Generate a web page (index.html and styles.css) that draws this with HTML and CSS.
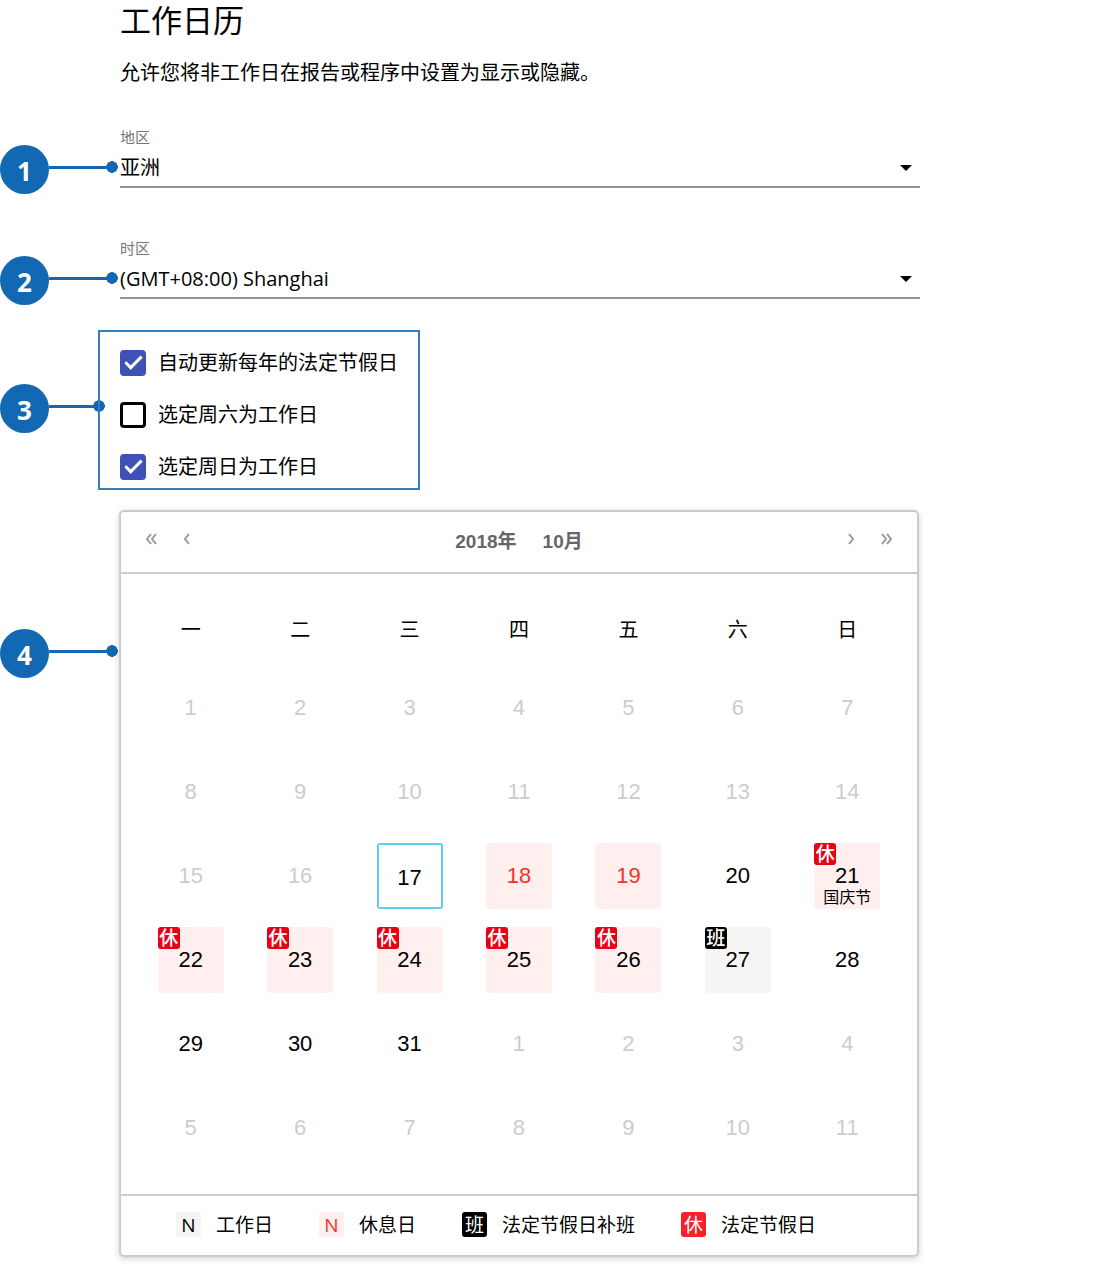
FILE: index.html
```html
<!DOCTYPE html>
<html lang="zh-CN">
<head>
<meta charset="utf-8">
<meta name="viewport" content="width=device-width, initial-scale=1">
<title>工作日历</title>
<link rel="stylesheet" href="styles.css">
</head>
<body>
<main class="page">
  <h1 class="title">工作日历</h1>
  <p class="intro">允许您将非工作日在报告或程序中设置为显示或隐藏。</p>

  <div class="field">
    <span class="callout"><b class="callout-number">1</b><i class="leader"></i></span>
    <label class="field-label" for="region">地区</label>
    <select class="field-select" id="region"><option>亚洲</option></select>
    <svg class="field-arrow" viewBox="0 0 12 6" aria-hidden="true"><path d="M0 0h12L6 6z"/></svg>
  </div>

  <div class="field">
    <span class="callout"><b class="callout-number">2</b><i class="leader"></i></span>
    <label class="field-label" for="timezone">时区</label>
    <select class="field-select" id="timezone"><option>(GMT+08:00) Shanghai</option></select>
    <svg class="field-arrow" viewBox="0 0 12 6" aria-hidden="true"><path d="M0 0h12L6 6z"/></svg>
  </div>

  <div class="options">
    <span class="callout callout-options"><b class="callout-number">3</b><i class="leader"></i></span>
    <label class="option"><input class="check" type="checkbox" checked>自动更新每年的法定节假日</label>
    <label class="option"><input class="check" type="checkbox">选定周六为工作日</label>
    <label class="option"><input class="check" type="checkbox" checked>选定周日为工作日</label>
  </div>

  <section class="calendar">
    <span class="callout callout-calendar"><b class="callout-number">4</b><i class="leader"></i></span>
    <header class="calendar-head">
      <div class="nav">
        <button class="nav-button" type="button" aria-label="上一年"><svg class="chevron" viewBox="0 0 12 12"><path d="M6 1 2 6l4 5M11 1 7 6l4 5"/></svg></button>
        <button class="nav-button" type="button" aria-label="上个月"><svg class="chevron" viewBox="0 0 12 12"><path d="M8 1 4 6l4 5"/></svg></button>
      </div>
      <h2 class="month"><span>2018年</span><span>10月</span></h2>
      <div class="nav">
        <button class="nav-button" type="button" aria-label="下个月"><svg class="chevron" viewBox="0 0 12 12"><path d="m4 1 4 5-4 5"/></svg></button>
        <button class="nav-button" type="button" aria-label="下一年"><svg class="chevron" viewBox="0 0 12 12"><path d="m1 1 4 5-4 5M6 1l4 5-4 5"/></svg></button>
      </div>
    </header>
    <div class="calendar-body">
      <table class="days">
        <thead>
          <tr><th>一</th><th>二</th><th>三</th><th>四</th><th>五</th><th>六</th><th>日</th></tr>
        </thead>
        <tbody>
          <tr>
            <td><button class="day muted" type="button">1</button></td>
            <td><button class="day muted" type="button">2</button></td>
            <td><button class="day muted" type="button">3</button></td>
            <td><button class="day muted" type="button">4</button></td>
            <td><button class="day muted" type="button">5</button></td>
            <td><button class="day muted" type="button">6</button></td>
            <td><button class="day muted" type="button">7</button></td>
          </tr>
          <tr>
            <td><button class="day muted" type="button">8</button></td>
            <td><button class="day muted" type="button">9</button></td>
            <td><button class="day muted" type="button">10</button></td>
            <td><button class="day muted" type="button">11</button></td>
            <td><button class="day muted" type="button">12</button></td>
            <td><button class="day muted" type="button">13</button></td>
            <td><button class="day muted" type="button">14</button></td>
          </tr>
          <tr>
            <td><button class="day muted" type="button">15</button></td>
            <td><button class="day muted" type="button">16</button></td>
            <td><button class="day today" type="button">17</button></td>
            <td><button class="day rest" type="button">18</button></td>
            <td><button class="day rest" type="button">19</button></td>
            <td><button class="day" type="button">20</button></td>
            <td><button class="day holiday" type="button"><span class="badge">休</span>21<span class="note">国庆节</span></button></td>
          </tr>
          <tr>
            <td><button class="day holiday" type="button"><span class="badge">休</span>22</button></td>
            <td><button class="day holiday" type="button"><span class="badge">休</span>23</button></td>
            <td><button class="day holiday" type="button"><span class="badge">休</span>24</button></td>
            <td><button class="day holiday" type="button"><span class="badge">休</span>25</button></td>
            <td><button class="day holiday" type="button"><span class="badge">休</span>26</button></td>
            <td><button class="day shift" type="button"><span class="badge badge-shift">班</span>27</button></td>
            <td><button class="day" type="button">28</button></td>
          </tr>
          <tr>
            <td><button class="day" type="button">29</button></td>
            <td><button class="day" type="button">30</button></td>
            <td><button class="day" type="button">31</button></td>
            <td><button class="day muted" type="button">1</button></td>
            <td><button class="day muted" type="button">2</button></td>
            <td><button class="day muted" type="button">3</button></td>
            <td><button class="day muted" type="button">4</button></td>
          </tr>
          <tr>
            <td><button class="day muted" type="button">5</button></td>
            <td><button class="day muted" type="button">6</button></td>
            <td><button class="day muted" type="button">7</button></td>
            <td><button class="day muted" type="button">8</button></td>
            <td><button class="day muted" type="button">9</button></td>
            <td><button class="day muted" type="button">10</button></td>
            <td><button class="day muted" type="button">11</button></td>
          </tr>
        </tbody>
      </table>
    </div>
    <ul class="legend">
      <li class="legend-item"><span class="swatch swatch-work">N</span>工作日</li>
      <li class="legend-item"><span class="swatch swatch-rest">N</span>休息日</li>
      <li class="legend-item"><span class="swatch swatch-shift">班</span>法定节假日补班</li>
      <li class="legend-item"><span class="swatch swatch-holiday">休</span>法定节假日</li>
    </ul>
  </section>
</main>
</body>
</html>
```
FILE: styles.css
```css
*,
*::before {
  box-sizing: border-box;
}

body {
  margin: 0;
  background: #fff;
  color: #000;
  font-family: "Open Sans", "Noto Sans CJK SC", sans-serif;
  font-size: 20px;
}

button,
select {
  margin: 0;
  padding: 0;
  border: 0;
  background: none;
  color: inherit;
  font: inherit;
}

.page {
  margin: 0 186px 14px 120px;
}

.title {
  margin: 0;
  font-size: 31px;
  font-weight: 400;
  line-height: 40px;
}

.intro {
  margin: 18px 0 38px;
  line-height: 30px;
}

/* Select fields */
.field {
  position: relative;
  margin-bottom: 49px;
}

.field-label {
  display: block;
  color: #777;
  font-size: 15px;
  line-height: 22px;
}

.field-select {
  display: block;
  width: 100%;
  height: 40px;
  border-bottom: 2px solid #949494;
  border-radius: 0;
  appearance: none;
}

.field-arrow {
  position: absolute;
  right: 8px;
  bottom: 17px;
  width: 12px;
  height: 6px;
  pointer-events: none;
}

/* Numbered callouts in the left margin */
.callout {
  position: absolute;
  top: 19px;
  left: -120px;
  z-index: -1;
  display: flex;
  width: 118px;
}

.callout-number {
  flex: none;
  width: 49px;
  height: 49px;
  border-radius: 50%;
  background: #1268b3;
  color: #fff;
  font-size: 26px;
  line-height: 52px;
  text-align: center;
}

.leader {
  flex: 1;
  height: 12px;
  margin-top: 16px;
  background:
    radial-gradient(circle closest-side, #1268b3 92%, transparent) right / 12px 12px no-repeat,
    linear-gradient(#1268b3, #1268b3) left / calc(100% - 6px) 3px no-repeat;
}

.callout-options {
  top: 52px;
  left: -100px;
  width: 105px;
}

.callout-calendar {
  top: 117px;
  left: -121px;
}

/* Check boxes */
.options {
  position: relative;
  display: flex;
  flex-direction: column;
  gap: 26px;
  width: 322px;
  margin: -18px 0 20px -22px;
  padding: 18px 0 8px 20px;
  border: 2px solid #347dbe;
}

.option {
  display: flex;
  align-items: center;
  gap: 12px;
  line-height: 26px;
}

.check {
  display: grid;
  place-items: center;
  width: 26px;
  height: 26px;
  margin: 0;
  border: 3px solid #000;
  border-radius: 4px;
  appearance: none;
}

.check:checked {
  border-color: #3f51b5;
  background: #3f51b5;
}

.check:checked::before {
  content: "";
  width: 17px;
  height: 9px;
  margin-bottom: 5px;
  border: solid #fff;
  border-width: 0 0 3px 3px;
  transform: rotate(-45deg);
}

/* Calendar */
.calendar {
  position: relative;
  margin: 0 1px 0 -1px;
  border: 2px solid #ccc;
  border-radius: 5px;
  box-shadow: 0 2px 6px rgba(0, 0, 0, 0.18);
}

.calendar-head {
  display: grid;
  grid-template-columns: auto 1fr auto;
  padding: 0 12px;
  border-bottom: 2px solid #ccc;
}

.nav {
  display: flex;
  height: 54px;
}

.nav-button {
  display: grid;
  place-items: center;
  width: 36px;
}

.chevron {
  width: 12px;
  height: 12px;
  fill: none;
  stroke: #999;
  stroke-width: 2;
}

.month {
  display: flex;
  justify-content: center;
  gap: 26px;
  margin: 0;
  color: #666;
  font: bold 19px/60px "Liberation Sans", "Noto Sans CJK SC", sans-serif;
}

.calendar-body {
  padding: 18px 15px 24px;
}

.days {
  width: 100%;
  border-collapse: collapse;
  table-layout: fixed;
  text-align: center;
}

.days th {
  height: 74px;
  padding: 0 0 2px;
  font-weight: 400;
}

.days td {
  height: 84px;
  padding: 0;
}

.day {
  position: relative;
  display: block;
  width: 66px;
  height: 66px;
  margin: 0 auto;
  border-radius: 3px;
  font: 22px/66px "Liberation Sans", "Noto Sans CJK SC", sans-serif;
}

.muted {
  color: #ccc;
}

.today {
  border: 2px solid #60cdf5;
}

.rest {
  background: #ffefee;
  color: #f5312d;
}

.holiday {
  background: #ffefee;
}

.shift {
  background: #f5f5f5;
}

.badge {
  position: absolute;
  top: 0;
  left: 0;
  width: 22px;
  height: 22px;
  border-radius: 3px;
  background: #ea0014;
  color: #fff;
  font-size: 19px;
  font-weight: 500;
  line-height: 23px;
}

.badge-shift {
  background: #000;
}

.note {
  position: absolute;
  right: 0;
  bottom: 0;
  left: 0;
  font-size: 16px;
  line-height: 22px;
}

/* Legend */
.legend {
  display: flex;
  flex-wrap: wrap;
  gap: 8px 46px;
  margin: 0;
  padding: 16px 55px 17px;
  border-top: 2px solid #ccc;
  font-size: 19px;
  line-height: 26px;
  list-style: none;
}

.legend-item {
  display: flex;
  gap: 15px;
}

.swatch {
  width: 25px;
  height: 25px;
  border-radius: 3px;
  text-align: center;
}

.swatch-work {
  background: #f5f5f5;
}

.swatch-rest {
  background: #ffefee;
  color: #f5312d;
}

.swatch-shift {
  background: #000;
  color: #fff;
}

.swatch-holiday {
  background: #f5222d;
  color: #fff;
}
```
